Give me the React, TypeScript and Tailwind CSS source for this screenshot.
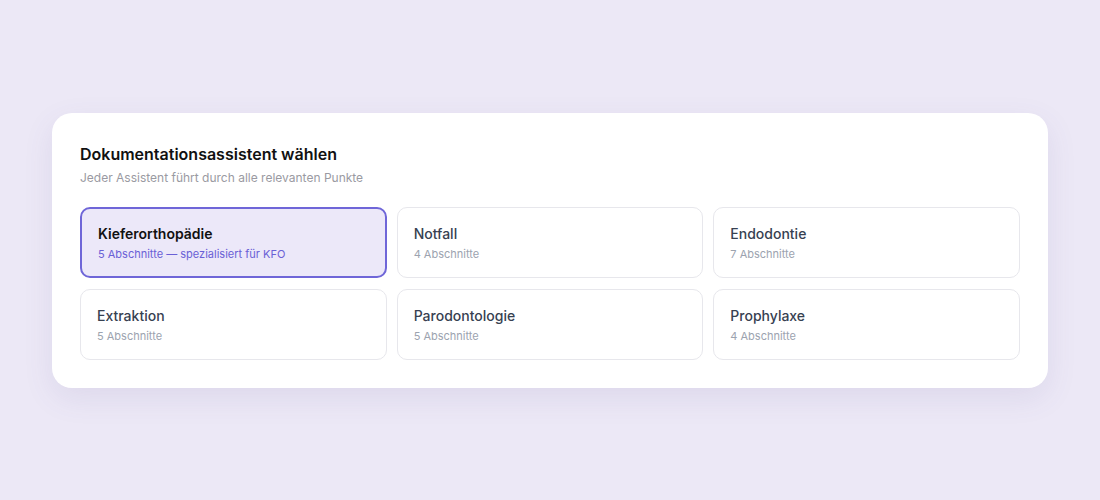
const options = [
  { name: "Kieferorthopädie", info: "5 Abschnitte — spezialisiert für KFO", active: true },
  { name: "Notfall", info: "4 Abschnitte" },
  { name: "Endodontie", info: "7 Abschnitte" },
  { name: "Extraktion", info: "5 Abschnitte" },
  { name: "Parodontologie", info: "5 Abschnitte" },
  { name: "Prophylaxe", info: "4 Abschnitte" },
];

export default function App() {
  return (
    <div
      className="w-[1100px] h-[500px] bg-[#ece8f6] flex items-center justify-center"
      style={{ fontFamily: "Inter, 'Noto Sans', sans-serif" }}
    >
      <div className="w-[996px] bg-white rounded-[20px] shadow-[0_10px_30px_rgba(90,80,150,0.10)] px-7 pt-[31px] pb-7">
        <h2 className="text-[16px] leading-[20px] font-semibold text-[#111111]">
          Dokumentationsassistent wählen
        </h2>
        <p className="mt-[6px] text-[12px] leading-4 text-[#9a9aa2]">
          Jeder Assistent führt durch alle relevanten Punkte
        </p>

        <div className="mt-[21px] grid grid-cols-3 gap-[10px] gap-y-[11px]">
          {options.map((o) =>
            o.active ? (
              <div
                key={o.name}
                className="rounded-[10px] border-2 border-[#6f66d8] bg-[#ece8f9] px-4 pt-[15px] pb-[14px]"
              >
                <div className="text-[14px] leading-5 font-semibold text-[#111111]">{o.name}</div>
                <div className="mt-[2px] text-[11px] leading-4 text-[#6a60d6]">{o.info}</div>
              </div>
            ) : (
              <div
                key={o.name}
                className="rounded-[10px] border border-[#e7e7ec] bg-white px-4 pt-4 pb-[15px]"
              >
                <div className="text-[14px] leading-5 font-medium text-[#374151]">{o.name}</div>
                <div className="mt-[2px] text-[11px] leading-4 text-[#9ca3af]">{o.info}</div>
              </div>
            )
          )}
        </div>
      </div>
    </div>
  );
}
